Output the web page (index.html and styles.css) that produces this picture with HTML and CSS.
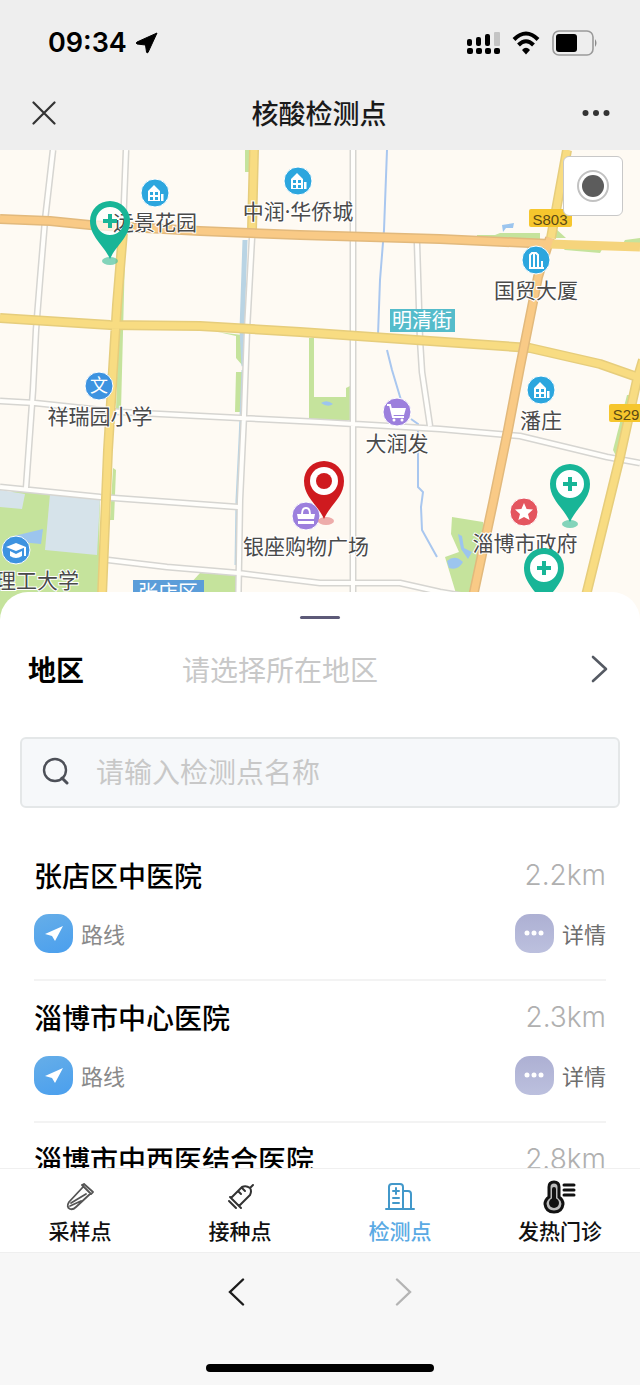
FILE: index.html
```html
<!DOCTYPE html>
<html lang="zh-CN">
<head>
    <meta charset="UTF-8">
    <meta name="viewport" content="width=device-width, initial-scale=1.0">
    <title>核酸检测点</title>
    <link rel="stylesheet" href="styles.css">
</head>
<body>
    <div class="app">
        <div class="status-bar">
            <div class="status-left">
                <span class="time">09:34</span>
                <svg width="24" height="22" viewBox="0 0 24 22"><path d="M22 1 L13 20.500 Q12 21.500 11.500 20 L10.500 13 L2 12 Q0.500 11 2 10 Z" fill="#000" stroke="#000" stroke-linejoin="round"/></svg>
            </div>
            <div class="status-right">
                <svg width="33" height="22" viewBox="0 0 33 22">
                    <g fill="#000">
                        <rect x="0" y="7" width="5" height="7" rx="2"/>
                        <rect x="9" y="5" width="5" height="9" rx="2"/>
                        <rect x="18" y="2" width="5" height="12" rx="2"/>
                        <rect x="0" y="16" width="6" height="6" rx="2"/>
                        <rect x="9" y="16" width="6" height="6" rx="2"/>
                        <rect x="18" y="16" width="6" height="6" rx="2"/>
                        <rect x="27" y="16" width="6" height="6" rx="2"/>
                    </g>
                    <rect x="27" y="0" width="6" height="14" rx="1" fill="#c4c4c4"/>
                </svg>
                <svg width="28" height="26" viewBox="0 0 28 26">
                    <g fill="none" stroke="#000" stroke-width="4">
                        <path d="M2 9.500 Q14 -2.500 26 9.500"/>
                        <path d="M6.500 15 Q14 7.500 21.500 15"/>
                    </g>
                    <path d="M10 20 Q14 15.500 18 20 L14 24.500 Z" fill="#000"/>
                </svg>
                <svg width="46" height="26" viewBox="0 0 46 26">
                    <rect x="1" y="1" width="40" height="24" rx="6" fill="none" stroke="#9a9a9a" stroke-width="1.600"/>
                    <rect x="4" y="4" width="21" height="18" rx="3" fill="#000"/>
                    <path d="M43 9 Q46 13 43 17 Z" fill="#8a8a8a"/>
                </svg>
            </div>
        </div>

        <header class="nav-bar">
            <button class="icon-button" type="button" aria-label="关闭">
                <svg width="24" height="24" viewBox="0 0 24 24"><path d="M1.500 1.500 L22.500 22.500 M22.500 1.500 L1.500 22.500" stroke="#333" stroke-width="2.200" stroke-linecap="round"/></svg>
            </button>
            <h1 class="nav-title">核酸检测点</h1>
            <button class="icon-button" type="button" aria-label="更多">
                <svg width="28" height="8" viewBox="0 0 28 8" fill="#333"><circle cx="3.500" cy="4" r="3"/><circle cx="14" cy="4" r="3"/><circle cx="24.500" cy="4" r="3"/></svg>
            </button>
        </header>

        <div class="map">
            <svg class="map-canvas" viewBox="0 0 640 470">
                <defs>
                    <g id="poi-home">
                        <circle r="14" fill="#2ca6de" stroke="#fff"/>
                        <path d="M-7 8 V-2 L-1 -8 L5 -2 V8 Z M6 1 H8.500 V8 H6 Z" fill="#fff"/>
                        <path d="M-5 -1 h3 v3 h-3z M0 -1 h3 v3 h-3z M-5 4 h3 v3 h-3z M0 4 h3 v3 h-3z" fill="#2ca6de"/>
                    </g>
                    <g id="pin-health">
                        <ellipse cx="0" cy="40" rx="8" ry="4" fill="#4fc3a1" opacity=".7"/>
                        <path fill-rule="evenodd" d="M0 38 C-6 24 -20 16 -20 0 A20 20 0 0 1 20 0 C20 16 6 24 0 38 Z M14 0 A14 14 0 1 0 -14 0 A14 14 0 1 0 14 0 Z" fill="#18b597"/>
                        <path d="M-7 0 H7 M0 -7 V7" stroke="#18b597" stroke-width="4"/>
                    </g>
                </defs>

                <rect width="640" height="470" fill="#fefaf3"/>

                <!-- parks and campus -->
                <g fill="#c5e39c">
                    <path d="M0 345 L24 338 L100 347 L98 470 H0 Z"/>
                    <path d="M190 434 L200 423 L238 425 V470 H186 Z"/>
                    <path d="M452 367 L483 372 L486 382 L472 470 H464 L445 407 L459 402 L451 384 Z"/>
                    <path d="M309 188 H314 V247 H346 V238 L350 236 V270 H309 Z"/>
                    <path d="M218 182 L242 185 V215 L236 208 V186 Z M236 222 H242 V262 H235 Z"/>
                    <path d="M245 0 H249 V22 H245 Z M121 105 H125 L121 260 H116 Z M113 318 L116 320 L114 370 H110 Z"/>
                    <path d="M477 85 H495 L500 83 H540 V90 H477 Z M555 78 L566 88 H554 Z M560 96 H604 L600 103 L565 100 Z M625 90 L640 88 V95 H622 Z"/>
                    <path d="M627 245 H634 L616 306 L613 300 Z"/>
                </g>
                <g fill="#d6e3ea">
                    <path d="M0 340 L25 344 L22 359 L0 357 Z"/>
                    <path d="M50 344 L100 348 L97 405 L45 400 Z"/>
                </g>
                <g fill="#9cc5ee">
                    <path d="M14 386 L43 379 L41 394 L20 392 Z"/>
                    <path d="M447 411 Q455 404 463 412 Q458 421 449 418 Z M458 384 L462 386 L464 398 L472 402 L468 409 L461 399 Z M502 75 L514 73 L513 78 L506 78 L503 82 Z"/>
                    <path d="M321 253 Q327 249 333 254 Q328 258 321 253 Z"/>
                </g>
                <g fill="none" stroke="#b9d4e4" stroke-width="5">
                    <path d="M245 90 L242 180 L244 216"/>
                    <path d="M243 220 L240 290 L237 350 L236 415" stroke-width="3"/>
                </g>
                <path d="M387 0 L384 80 L380 130 L378 185 M387 200 L392 220 L401 250 M411 269 L418 274 L418 337 L423 342 L421 357 L422 380 L437 407" fill="none" stroke="#a9c7ef" stroke-width="2"/>

                <!-- side streets: grey casing, white fill -->
                <g fill="none" stroke-linejoin="round">
                    <path stroke="#d6d5d1" stroke-width="7" d="M53 0 L45 70 L40 130 L36 180 L33 240 L26 338 M126 0 L123 78 M252 88 L247 180 L244 265 L240 350 L238 470 M353 0 V470 M417 93 L420 190 L422 222 L430 276 M0 251 L35 253 L120 262 L240 268 L320 272 L440 279 L520 286 L607 307 L640 313 M0 337 L100 347 L238 357 M108 410 L167 417 L238 423 L320 433 L400 433 L440 442 L500 452"/>
                    <path stroke="#fffefb" stroke-width="4" d="M53 0 L45 70 L40 130 L36 180 L33 240 L26 338 M126 0 L123 78 M252 88 L247 180 L244 265 L240 350 L238 470 M353 0 V470 M417 93 L420 190 L422 222 L430 276 M0 251 L35 253 L120 262 L240 268 L320 272 L440 279 L520 286 L607 307 L640 313 M0 337 L100 347 L238 357 M108 410 L167 417 L238 423 L320 433 L400 433 L440 442 L500 452"/>
                </g>

                <!-- main roads -->
                <g fill="none" stroke-linejoin="round">
                    <path stroke="#e6cd7c" stroke-width="10" d="M123 82 L117 155 L113 220 L108 300 L101 470 M254 0 L252 80 M567 0 L551 88 M0 168 L110 175 L200 176 L300 182 L430 191 L530 198 L600 214 L640 228 M643 210 L637 230 L620 307 L607 360 L580 470"/>
                    <path stroke="#f8dc82" stroke-width="7" d="M123 82 L117 155 L113 220 L108 300 L101 470 M254 0 L252 80 M567 0 L551 88 M0 168 L110 175 L200 176 L300 182 L430 191 L530 198 L600 214 L640 228 M643 210 L637 230 L620 307 L607 360 L580 470"/>
                    <path stroke="#e2b97c" stroke-width="10" d="M0 69 L50 71 L90 75 L200 81 L300 85 L440 89 L550 94 M550 88 L538 127 L520 217 L508 280 L493 353 L468 470"/>
                    <path stroke="#f5d47c" stroke-width="9" d="M549 94 L640 97"/>
                    <path stroke="#f9ca86" stroke-width="7" d="M0 69 L50 71 L90 75 L200 81 L300 85 L440 89 L550 94 M550 88 L538 127 L520 217 L508 280 L493 353 L468 470"/>
                </g>

                <!-- road and district tags -->
                <rect x="529" y="59" width="43" height="18" rx="2" fill="#f6c62d"/>
                <text class="road-tag" x="550" y="75">S803</text>
                <rect x="609" y="254" width="45" height="18" rx="2" fill="#f6c62d"/>
                <text class="road-tag" x="626" y="270">S29</text>
                <rect x="390" y="159" width="65" height="23" fill="#55bccb"/>
                <text class="area-tag" x="422" y="178">明清街</text>
                <rect x="133" y="430" width="71" height="24" fill="#5b9dd9"/>
                <text class="area-tag" x="168" y="450">张店区</text>

                <circle cx="110" cy="72" r="15" fill="#fff" opacity=".7"/>

                <text class="poi" x="155" y="80">远景花园</text>
                <text class="poi" x="298" y="69">中润·华侨城</text>
                <text class="poi" x="536" y="148">国贸大厦</text>
                <text class="poi" x="100" y="274">祥瑞园小学</text>
                <text class="poi" x="397" y="301">大润发</text>
                <text class="poi" x="541" y="278">潘庄</text>
                <text class="poi" x="306" y="404">银座购物广场</text>
                <text class="poi" x="525" y="401">淄博市政府</text>
                <text class="poi" x="37" y="438">理工大学</text>

                <use href="#poi-home" x="155" y="43"/>
                <use href="#poi-home" x="298" y="31"/>
                <use href="#poi-home" x="541" y="240"/>
                <g transform="translate(536 110)">
                    <circle r="14" fill="#2ca6de" stroke="#fff"/>
                    <path d="M-6 7 V-5 L-4 -7 H0 L2 -5 V7 M-2 -6 V7 M-7 8 H8 M6 8 V1" fill="none" stroke="#fff" stroke-width="2"/>
                </g>
                <g transform="translate(99 236)">
                    <circle r="14" fill="#3d93e0" stroke="#fff"/>
                    <text class="poi-glyph" y="6">文</text>
                </g>
                <g transform="translate(16 400)">
                    <circle r="14" fill="#3d93e0" stroke="#fff"/>
                    <path d="M-10 -3 L0 -7 L10 -3 L0 1 Z M-6 1 L0 4 L6 1 V6 Q0 10 -6 6 Z" fill="#fff"/>
                    <path d="M9 -3 V6" stroke="#fff" stroke-width="2"/>
                </g>
                <g transform="translate(397 262)">
                    <circle r="14" fill="#9c7fdd" stroke="#fff"/>
                    <path d="M-6 -4 H9 L7 3 H-4 Z" fill="#fff"/>
                    <path d="M-10 -7 H-7 L-4 5 H7" fill="none" stroke="#fff" stroke-width="2"/>
                    <circle cx="-3" cy="8" r="1.500" fill="#fff"/><circle cx="5" cy="8" r="1.500" fill="#fff"/>
                </g>
                <g transform="translate(306 366)">
                    <circle r="14" fill="#9c7fdd" stroke="#fff"/>
                    <path d="M-9 -2 H9 L8 3 H-8 Z M-8 5 H8 V8 H-8 Z" fill="#fff"/>
                    <path d="M-4 -2 Q-4 -8 0 -8 Q4 -8 4 -2" fill="none" stroke="#fff" stroke-width="2"/>
                </g>
                <g transform="translate(524 362)">
                    <circle r="14" fill="#e4555f" stroke="#fff"/>
                    <path d="M0 -9 L2.600 -3 L9 -2.500 L4 2 L5.600 8 L0 5 L-5.600 8 L-4 2 L-9 -2.500 L-2.600 -3 Z" fill="#fff"/>
                </g>

                <!-- pins -->
                <use href="#pin-health" x="110" y="71"/>
                <circle cx="570" cy="334" r="15" fill="#fff"/>
                <use href="#pin-health" x="570" y="334"/>
                <circle cx="544" cy="418" r="15" fill="#fff"/>
                <use href="#pin-health" x="544" y="418"/>
                <g transform="translate(324 331)">
                    <ellipse cx="2" cy="40" rx="8" ry="4" fill="#e58a8a" opacity=".7"/>
                    <path d="M0 38 C-6 24 -20 16 -20 0 A20 20 0 0 1 20 0 C20 16 6 24 0 38 Z" fill="#cf1a1f"/>
                    <circle r="14" fill="#fff"/>
                    <circle r="8" fill="#cf1a1f"/>
                </g>
            </svg>
            <button class="locate-button" type="button" aria-label="定位">
                <svg width="34" height="34" viewBox="0 0 34 34"><circle cx="17" cy="17" r="15" fill="none" stroke="#c2c2c2" stroke-width="2"/><circle cx="17" cy="17" r="11" fill="#5c5c5c"/></svg>
            </button>
        </div>

        <main class="sheet">
            <div class="handle"></div>

            <div class="region-row">
                <label class="region-label" for="region">地区</label>
                <button class="region-picker" id="region" type="button">
                    <span>请选择所在地区</span>
                    <svg width="18" height="28" viewBox="0 0 18 28"><path d="M3 2 L16 14 L3 26" fill="none" stroke="#555a63" stroke-width="2.600" stroke-linecap="round" stroke-linejoin="round"/></svg>
                </button>
            </div>

            <div class="search-box">
                <svg width="28" height="28" viewBox="0 0 28 28"><circle cx="13" cy="13" r="11" fill="none" stroke="#4d5058" stroke-width="2.400"/><path d="M20 21 L25 26" stroke="#4d5058" stroke-width="3" stroke-linecap="round"/></svg>
                <input class="search-input" type="text" placeholder="请输入检测点名称" aria-label="请输入检测点名称">
            </div>

            <div class="site-list">
                <div class="site">
                    <div class="site-row">
                        <h2 class="site-name">张店区中医院</h2>
                        <span class="distance">2.2km</span>
                    </div>
                    <div class="site-row">
                        <button class="site-action" type="button">
                            <span class="action-icon route"><svg width="20" height="20" viewBox="0 0 20 20"><path d="M19 3 L11 18 L8 13 L1 11 Z" fill="#fff"/></svg></span>
                            路线
                        </button>
                        <button class="site-action detail-text" type="button">
                            <span class="action-icon detail"><svg width="20" height="6" viewBox="0 0 20 6" fill="#fff"><circle cx="3" cy="3" r="2.500"/><circle cx="10" cy="3" r="2.500"/><circle cx="17" cy="3" r="2.500"/></svg></span>
                            详情
                        </button>
                    </div>
                </div>

                <div class="site">
                    <div class="site-row">
                        <h2 class="site-name">淄博市中心医院</h2>
                        <span class="distance">2.3km</span>
                    </div>
                    <div class="site-row">
                        <button class="site-action" type="button">
                            <span class="action-icon route"><svg width="20" height="20" viewBox="0 0 20 20"><path d="M19 3 L11 18 L8 13 L1 11 Z" fill="#fff"/></svg></span>
                            路线
                        </button>
                        <button class="site-action detail-text" type="button">
                            <span class="action-icon detail"><svg width="20" height="6" viewBox="0 0 20 6" fill="#fff"><circle cx="3" cy="3" r="2.500"/><circle cx="10" cy="3" r="2.500"/><circle cx="17" cy="3" r="2.500"/></svg></span>
                            详情
                        </button>
                    </div>
                </div>

                <div class="site">
                    <div class="site-row">
                        <h2 class="site-name">淄博市中西医结合医院</h2>
                        <span class="distance">2.8km</span>
                    </div>
                </div>
            </div>
        </main>

        <nav class="tab-bar">
            <a class="tab" href="#sampling">
                <svg width="36" height="36" viewBox="0 0 36 36" fill="none" stroke="#555" stroke-width="1.800" stroke-linecap="round" stroke-linejoin="round">
                    <path d="M21 8 L7 23 Q4 28 8 30 Q11 31 14 28 L28 15 M20 6 L29 15 M22 5 L31 13 M20 6 L22 5 M29 15 L31 13 M9 24 L24 15 M8 27 L19 22"/>
                </svg>
                采样点
            </a>
            <a class="tab" href="#vaccine">
                <svg width="36" height="36" viewBox="0 0 36 36" fill="none" stroke="#333" stroke-width="2" stroke-linecap="round" stroke-linejoin="round">
                    <path d="M9 19 L20 8 Q24 6 28 9 Q30 12 28 16 L17 27 M28 9 L31 6 M8 18 L19 29 M7 22 L14 29 M16 12 L19 15 M20 9 L23 12"/>
                </svg>
                接种点
            </a>
            <a class="tab active" href="#testing">
                <svg width="36" height="36" viewBox="0 0 36 36" fill="none" stroke="#4298ca" stroke-width="2" stroke-linecap="round" stroke-linejoin="round">
                    <path d="M4 30 H32 M7 30 V8 Q7 5 10 5 H18 Q21 5 21 8 V30 M21 12 H26 Q29 12 29 15 V30 M14 9 V15 M11 12 H17 M11 19 H17 M11 24 H17"/>
                </svg>
                检测点
            </a>
            <a class="tab" href="#fever">
                <svg width="36" height="36" viewBox="0 0 36 36">
                    <path d="M7 18 V8 Q7 3 12 3 Q17 3 17 8 V18 Q21 21 21 25 Q20 33 12 33 Q4 33 3 25 Q3 21 7 18 Z" fill="#bbb" stroke="#111" stroke-width="3"/>
                    <path d="M12 10 V24" stroke="#111" stroke-width="4" stroke-linecap="round"/>
                    <circle cx="12" cy="24" r="5" fill="#111"/>
                    <path d="M22 6 H32 M22 11 H32 M22 16 H32" stroke="#111" stroke-width="3" stroke-linecap="round"/>
                </svg>
                发热门诊
            </a>
        </nav>

        <footer class="browser-bar">
            <div class="history">
                <button class="icon-button" type="button" aria-label="后退">
                    <svg width="18" height="28" viewBox="0 0 18 28"><path d="M15 1.500 L2 14 L15 26.500" fill="none" stroke="#1c1c1c" stroke-width="2.400" stroke-linecap="round"/></svg>
                </button>
                <button class="icon-button" type="button" aria-label="前进">
                    <svg width="18" height="28" viewBox="0 0 18 28"><path d="M3 1.500 L16 14 L3 26.500" fill="none" stroke="#b4b4b4" stroke-width="2.400" stroke-linecap="round"/></svg>
                </button>
            </div>
            <div class="home-indicator"></div>
        </footer>
    </div>
</body>
</html>
```

FILE: styles.css
```css
* {
    margin: 0;
    padding: 0;
    box-sizing: border-box;
}

body {
    font-family: "Noto Sans CJK SC", sans-serif;
    background: #fff;
    color: #111;
}

button {
    font: inherit;
    color: inherit;
    background: none;
    border: none;
    cursor: pointer;
}

svg {
    display: block;
    flex-shrink: 0;
}

.app {
    display: flex;
    flex-direction: column;
    height: 100vh;
    overflow: hidden;
}

/* status bar + title */
.status-bar {
    display: flex;
    justify-content: space-between;
    align-items: center;
    height: 76px;
    padding: 10px 42px 0 48px;
    background: #eee;
    flex-shrink: 0;
}

.status-left {
    display: flex;
    align-items: center;
    gap: 8px;
}

.status-right {
    display: flex;
    align-items: center;
    gap: 12px;
}

.time {
    font-family: Inter, sans-serif;
    font-size: 27px;
    font-weight: 600;
    line-height: 36px;
    color: #000;
}

.nav-bar {
    display: flex;
    justify-content: space-between;
    align-items: center;
    height: 74px;
    padding: 0 30px 0 32px;
    background: #eee;
    flex-shrink: 0;
}

.nav-title {
    font-size: 27px;
    font-weight: 500;
    line-height: 40px;
    color: #1a1a1a;
}

/* map */
.map {
    position: relative;
    flex-shrink: 0;
}

.map-canvas {
    width: 100%;
    height: auto;
}

.poi {
    font-family: "Noto Sans", "Noto Sans CJK SC", sans-serif;
    font-size: 21px;
    fill: #4a4a4a;
    text-anchor: middle;
    stroke: #fff;
    stroke-width: 2px;
    paint-order: stroke;
}

.poi-glyph {
    font-size: 18px;
    fill: #fff;
    text-anchor: middle;
}

.area-tag {
    font-size: 20px;
    fill: #fff;
    text-anchor: middle;
}

.road-tag {
    font-family: "Liberation Sans", sans-serif;
    font-size: 15px;
    fill: #5c4a14;
    text-anchor: middle;
}

.locate-button {
    position: absolute;
    top: 6px;
    right: 17px;
    width: 60px;
    height: 60px;
    display: flex;
    align-items: center;
    justify-content: center;
    background: #fff;
    border: 1px solid #c8c8c8;
    border-radius: 6px;
}

/* bottom sheet */
.sheet {
    position: relative;
    display: flex;
    flex-direction: column;
    flex: 1;
    min-height: 0;
    margin-top: -28px;
    padding-top: 24px;
    background: #fff;
    border-radius: 28px 28px 0 0;
}

.handle {
    width: 40px;
    height: 3px;
    margin: 0 auto;
    background: #5d5a78;
    border-radius: 2px;
    flex-shrink: 0;
}

.region-row {
    display: flex;
    align-items: center;
    padding: 30px 32px 0 28px;
}

.region-label {
    width: 154px;
    font-size: 28px;
    font-weight: 700;
    line-height: 40px;
    color: #000;
}

.region-picker {
    flex: 1;
    display: flex;
    justify-content: space-between;
    align-items: center;
    font-size: 28px;
    line-height: 40px;
    color: #c8c8c8;
}

.search-box {
    display: flex;
    align-items: center;
    gap: 26px;
    height: 71px;
    margin: 48px 20px 0;
    padding: 0 20px 4px;
    background: #f6f8fa;
    border: 2px solid #e4e7e8;
    border-radius: 6px;
    flex-shrink: 0;
}

.search-input {
    flex: 1;
    min-width: 0;
    font: inherit;
    font-size: 28px;
    line-height: 40px;
    background: none;
    border: none;
    outline: none;
}

.search-input::placeholder {
    color: #c8c8c8;
    opacity: 1;
}

.site-list {
    flex: 1;
    min-height: 0;
    margin-top: 31px;
    padding: 0 34px;
    overflow: hidden;
}

.site {
    display: flex;
    flex-direction: column;
    gap: 18px;
    padding: 16px 0 26px;
    border-bottom: 2px solid #f3f3f3;
}

.site-row {
    display: flex;
    justify-content: space-between;
    align-items: center;
}

.site-name {
    font-size: 28px;
    font-weight: 500;
    line-height: 40px;
    color: #000;
}

.distance {
    font-family: Inter, sans-serif;
    font-size: 28px;
    font-weight: 300;
    line-height: 40px;
    color: #b0b0b0;
}

.site-action {
    display: flex;
    align-items: center;
    gap: 8px;
    font-size: 22px;
    line-height: 40px;
    color: #8a8a8a;
}

.detail-text {
    color: #6e6e6e;
}

.action-icon {
    display: flex;
    align-items: center;
    justify-content: center;
    width: 39px;
    height: 39px;
    border-radius: 15px;
}

.route {
    background: linear-gradient(160deg, #66aee8, #4a9fee);
}

.detail {
    background: linear-gradient(180deg, #adb0d3, #bcc0de);
}

/* tabs */
.tab-bar {
    position: relative;
    display: flex;
    height: 84px;
    padding-top: 10px;
    background: #fff;
    border-top: 1px solid #f0f0f0;
    flex-shrink: 0;
}

.tab {
    flex: 1;
    display: flex;
    flex-direction: column;
    align-items: center;
    font-size: 21px;
    font-weight: 500;
    line-height: 30px;
    color: #111;
    text-decoration: none;
}

.tab.active {
    color: #5aaae4;
}

.browser-bar {
    display: flex;
    flex-direction: column;
    justify-content: space-between;
    align-items: center;
    height: 133px;
    padding: 25px 0 13px;
    background: #f7f7f7;
    border-top: 1px solid #efefef;
    flex-shrink: 0;
}

.history {
    display: flex;
    gap: 148px;
}

.home-indicator {
    width: 228px;
    height: 8px;
    background: #000;
    border-radius: 4px;
}
```
